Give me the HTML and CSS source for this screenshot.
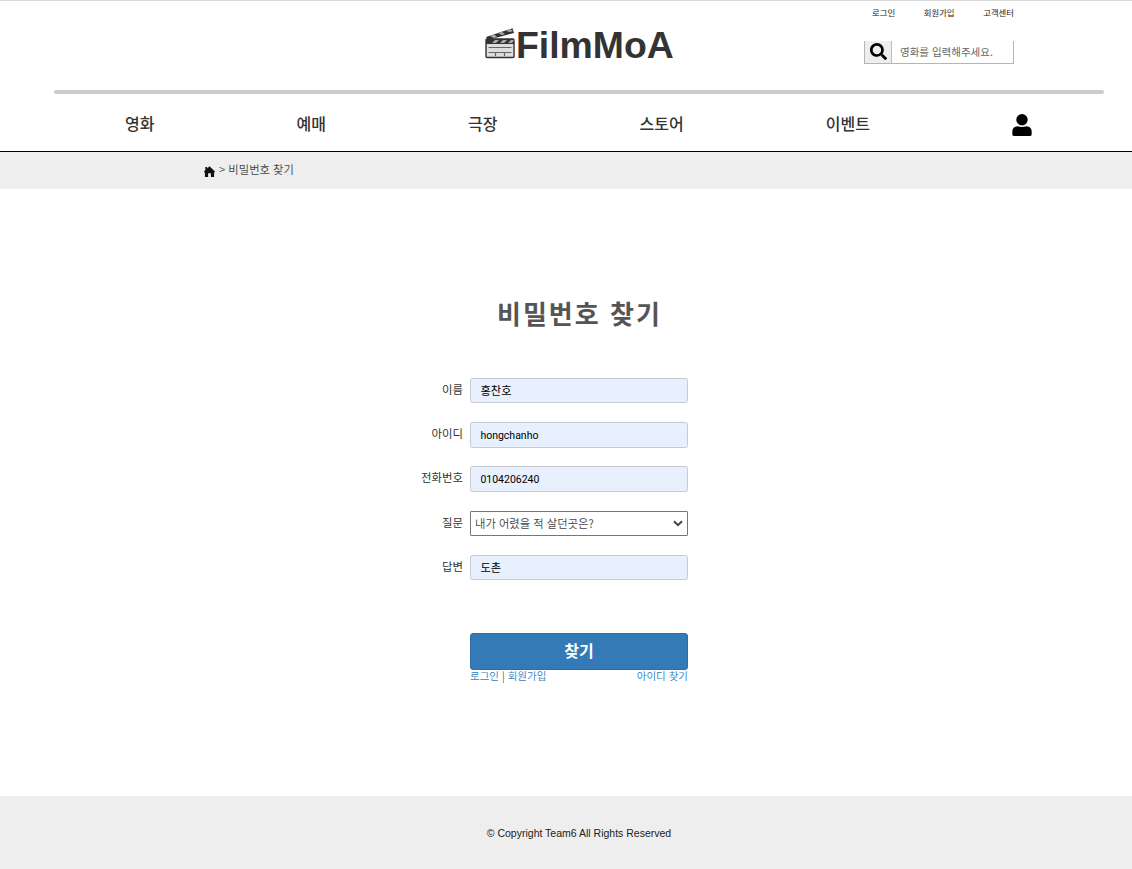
FILE: index.html
```html
<!DOCTYPE html>
<html lang="ko">
<head>
<meta charset="utf-8">
<title>FilmMoA</title>
<link rel="stylesheet" href="styles.css">
</head>
<body>
<header class="header">
  <a class="logo">
    <svg class="logo-icon" viewBox="0 0 30 32">
      <path d="M1 10 27.5 1.2 29 6 3 13Z" fill="#333"/>
      <path d="m5 9 4 2 3-1-3-3Zm8-3 4 2 3-1-3-2Zm8-2 4 1 3-1-3-2Z" fill="#aaa"/>
      <rect x="1" y="12" width="28" height="18.500" rx="1" fill="#ddd" stroke="#333" stroke-width="1.4"/>
      <path d="M1 12h28v5H1Z" fill="#333"/>
      <path d="m7 16 3-3h4l-3 3Zm8 0 3-3h4l-3 3Zm8 0 3-3h3l-2 3Z" fill="#aaa"/>
      <path d="M3.500 20.500h23M3.500 25.500h23M10.500 26v3M19.500 26v3" fill="none" stroke="#666" stroke-width="1.200"/>
    </svg><span>FilmMoA</span>
  </a>
  <div class="tools">
    <div class="top-links"><a>로그인</a><a>회원가입</a><a>고객센터</a></div>
    <div class="search">
      <span class="search-button"><svg viewBox="0 0 512 512"><path d="M505 442.700 405.300 343c-4.500-4.500-10.600-7-17-7H372c27.600-35.300 44-79.700 44-128C416 93.100 322.900 0 208 0S0 93.100 0 208s93.100 208 208 208c48.300 0 92.700-16.400 128-44v16.300c0 6.400 2.500 12.500 7 17l99.700 99.700c9.400 9.400 24.600 9.400 33.900 0l28.300-28.300c9.400-9.400 9.400-24.600.1-34zM208 336c-70.700 0-128-57.200-128-128 0-70.700 57.200-128 128-128 70.700 0 128 57.200 128 128 0 70.700-57.200 128-128 128z"/></svg></span>
      <span class="search-text">영화를 입력해주세요.</span>
    </div>
  </div>
</header>
<div class="divider"></div>
<nav class="nav">
  <a>영화</a><a>예매</a><a>극장</a><a>스토어</a><a>이벤트</a>
  <svg class="user" viewBox="0 0 20 22"><circle cx="10" cy="5.700" r="5.700"/><path d="M5.500 12.300q4.500 1.600 9 0 5 .2 5.200 5.200V20q0 2-1.500 2H1.800q-1.500 0-1.500-2v-2.500q.2-5 5.200-5.200Z"/></svg>
</nav>
<div class="breadcrumb">
  <svg class="home" viewBox="0 0 12 12"><path d="M6 .3 12 6l-1 1.300V12H7.500V8h-3v4H1V7.300L0 6l1.500-1.700V1h2v1.600Z" fill="#111"/></svg>
  <span>&gt; 비밀번호 찾기</span>
</div>
<main class="main">
  <h1 class="title">비밀번호 찾기</h1>
  <form class="form">
    <label class="label">이름</label><div class="field hangul">홍찬호</div>
    <label class="label">아이디</label><div class="field">hongchanho</div>
    <label class="label">전화번호</label><div class="field">0104206240</div>
    <label class="label">질문</label><div class="field select"><span>내가 어렸을 적 살던곳은?</span><svg class="arrow" viewBox="0 0 10 7"><path d="m1 1.200 4 4 4-4"/></svg></div>
    <label class="label">답변</label><div class="field hangul">도촌</div>
  </form>
  <div class="actions">
    <div class="submit">찾기</div>
    <div class="links"><span><a>로그인</a> <i>|</i> <a>회원가입</a></span><a>아이디 찾기</a></div>
  </div>
</main>
<footer class="footer">© Copyright Team6 All Rights Reserved</footer>
</body>
</html>
```
FILE: styles.css
```css
* { box-sizing: border-box; }
body {
  margin: 0;
  height: 869px;
  display: flex;
  flex-direction: column;
  overflow: hidden;
  background: #fff;
  color: #333;
  font-family: "Noto Sans CJK KR", sans-serif;
}
.header {
  height: 90px;
  flex: none;
  border-top: 1px solid #dadada;
  display: flex;
  padding-left: 485px;
}
.logo {
  width: 379px;
  display: flex;
  padding-top: 23px;
  font: bold 37.4px/42px "Liberation Sans", sans-serif;
}
.logo-icon { width: 30px; height: 32px; margin: 3px 1px 0 0; }
.tools { width: 150px; }
.top-links {
  display: flex;
  justify-content: space-between;
  padding-left: 8px;
  height: 40px;
  padding-top: 5px;
  font-size: 8.4px;
  line-height: 12px;
  white-space: nowrap;
  color: #222;
}
.search {
  height: 23px;
  display: flex;
  border: 1px solid #b5b5b5;
  border-top: 0;
}
.search-button {
  width: 27px;
  background: #eee;
  border-right: 1px solid #bbb;
  display: flex;
  align-items: center;
  justify-content: center;
}
.search-button svg { width: 17px; height: 17px; margin-bottom: 1px; }
.search-text {
  padding-left: 8px;
  font-size: 10.5px;
  line-height: 22px;
  color: #666;
  white-space: nowrap;
}
.divider {
  flex: none;
  height: 4px;
  margin: 0 28px 0 54px;
  border-radius: 2px;
  background: #ccc;
}
.nav {
  flex: none;
  height: 58px;
  padding: 0 100px 0 125px;
  border-bottom: 1px solid #000;
  display: flex;
  justify-content: space-between;
  font-size: 16px;
  font-weight: 500;
  line-height: 58px;
}
.user { width: 20px; height: 22px; margin-top: 20px; }
.breadcrumb {
  flex: none;
  height: 37px;
  padding: 0 0 0 204px;
  display: flex;
  gap: 4px;
  background: #eee;
  color: #444;
  font-size: 11.3px;
  font-weight: 350;
  line-height: 35px;
}
.home { width: 11px; height: 11px; margin-top: 14px; }
.main { flex: none; height: 607px; padding-top: 104px; }
.title {
  margin: 0 0 0 497px;
  font-size: 26px;
  line-height: 40px;
  letter-spacing: 2px;
  color: #555;
}
.form {
  margin: 45px 0 0 411px;
  display: grid;
  grid-template-columns: 52px 218px;
  grid-auto-rows: 25.3px;
  gap: 18.95px 7px;
}
.label {
  text-align: right;
  font-size: 11.4px;
  line-height: 23.4px;
  color: #333;
}
.field {
  height: 25.3px;
  padding-left: 9.4px;
  border: 1px solid #c5cad3;
  border-radius: 2.5px;
  background: #e8f0fe;
  color: #000;
  font: 10.5px/25px Roboto, "Noto Sans CJK KR", sans-serif;
}
.hangul { font-size: 11.3px; }
.select {
  padding: 0 4px;
  background: #fff;
  border-color: #767676;
  border-radius: 1px;
  display: flex;
  align-items: center;
  justify-content: space-between;
  color: #444;
  font: 350 11.3px/22px "Noto Sans CJK KR", sans-serif;
}
.arrow { width: 10px; height: 7px; fill: none; stroke: #444; stroke-width: 2; }
.actions { width: 218px; margin: 52.7px 0 0 470px; }
.submit {
  height: 37px;
  border: 1px solid #2e6da4;
  border-radius: 3px;
  background: #337ab7;
  color: #fff;
  font-size: 16px;
  font-weight: 700;
  line-height: 33px;
  text-align: center;
}
.links {
  display: flex;
  justify-content: space-between;
  color: #337ab7;
  font-size: 10.5px;
  font-weight: 350;
  line-height: 12px;
}
.links i { color: #555; font-style: normal; }
.footer {
  flex: none;
  height: 73px;
  padding-left: 26px;
  background: #eee;
  color: #222;
  font: 10.5px/74px "Liberation Sans", sans-serif;
  text-align: center;
}
```
